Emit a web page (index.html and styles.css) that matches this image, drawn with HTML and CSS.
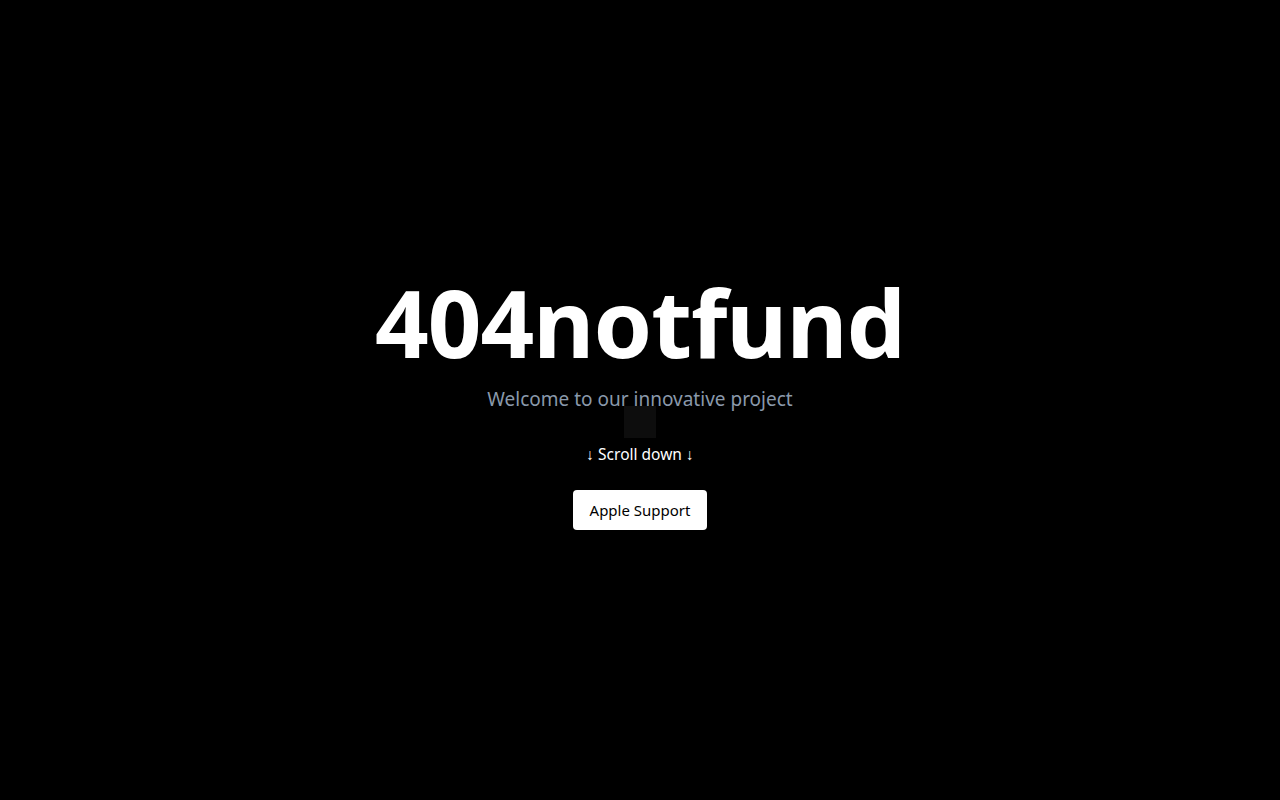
FILE: index.html
```html
<!DOCTYPE html>
<html lang="en">
<head>
<meta charset="utf-8">
<title>404notfund</title>
<link rel="stylesheet" href="styles.css">
</head>
<body>
<main class="hero">
  <h1 class="title">404notfund</h1>
  <p class="subtitle">Welcome to our innovative project</p>
  <div class="square"></div>
  <p class="scroll">↓ Scroll down ↓</p>
  <button class="btn">Apple Support</button>
</main>
</body>
</html>
```

FILE: styles.css
```css
html, body {
  margin: 0;
  padding: 0;
  background: #000;
  height: 100%;
}
body {
  font-family: "Noto Sans", "Open Sans", sans-serif;
  color: #fff;
}
.hero {
  height: 800px;
  box-sizing: border-box;
  padding-top: 4px;
  display: flex;
  flex-direction: column;
  align-items: center;
  justify-content: center;
}
.title {
  margin: 0;
  font-size: 94px;
  font-weight: 700;
  line-height: 1;
  letter-spacing: -1px;
}
.subtitle {
  margin: 18px 0 0;
  font-size: 19px;
  line-height: 24px;
  color: #8a99ab;
}
.square {
  width: 32px;
  height: 32px;
  background: #0d0d0d;
  margin-top: -5px;
}
.scroll {
  margin: 6px 0 0;
  font-size: 15.5px;
  line-height: 20px;
}
.btn {
  margin-top: 26px;
  font-family: inherit;
  font-size: 15px;
  color: #000;
  background: #fff;
  border: none;
  border-radius: 4px;
  padding: 0 17px;
  height: 40px;
}
```
